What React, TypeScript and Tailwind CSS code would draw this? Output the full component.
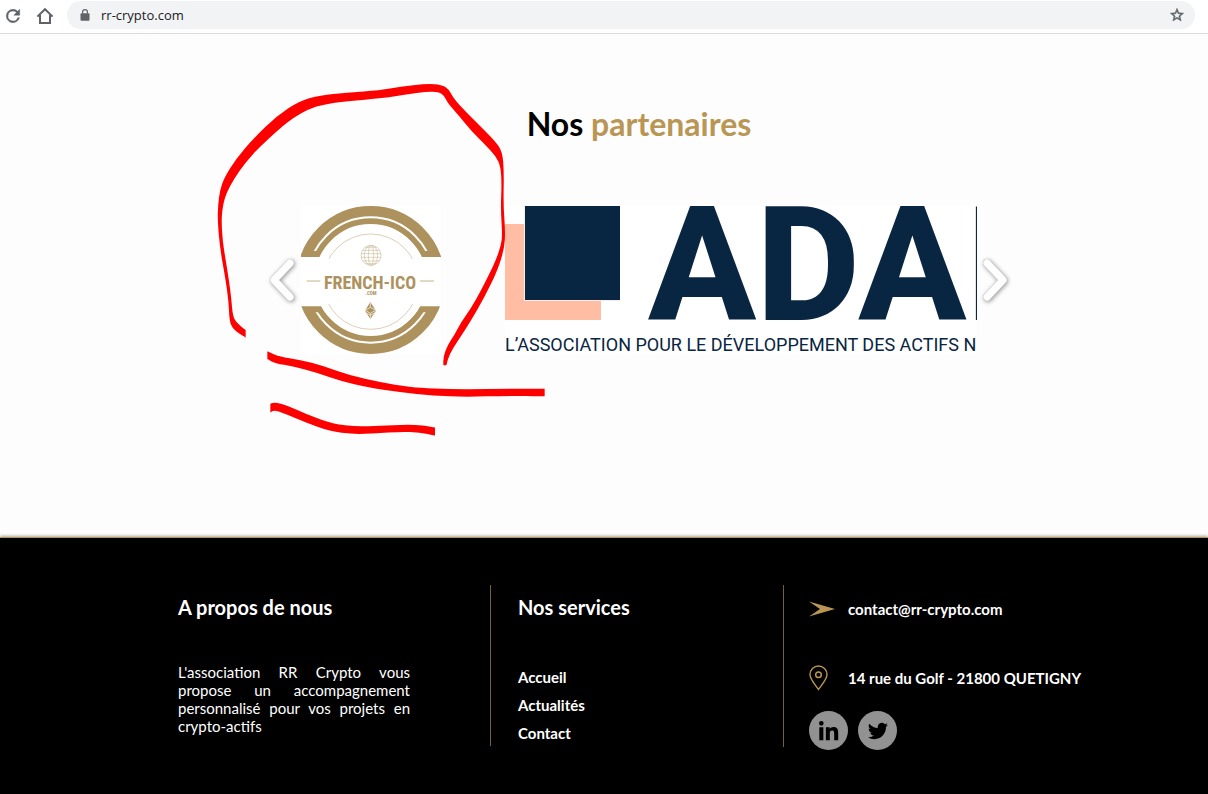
import React from "react";

type Point = [number, number];

/* Closed outline that runs smoothly through the midpoints of its points. */
function outline(points: Point[]): string {
  const mid = (a: Point, b: Point): Point => [(a[0] + b[0]) / 2, (a[1] + b[1]) / 2];
  const n = points.length;
  const start = mid(points[n - 1], points[0]);
  let d = `M${start[0]} ${start[1]}`;
  points.forEach((p, i) => {
    const m = mid(p, points[(i + 1) % n]);
    d += `Q${p[0]} ${p[1]} ${m[0]} ${m[1]}`;
  });
  return d + "Z";
}

const loop: Point[] = [
  [137, 788], [137, 788], [120, 777], [97, 760], [88, 735], [86, 680], [76, 610], [60, 520], [53, 440], [54, 390],
  [60, 345], [73, 308], [108, 252], [160, 191], [230, 123], [300, 77], [360, 61], [440, 53], [540, 46], [600, 35],
  [680, 26], [725, 29], [747, 43], [760, 70], [800, 113], [840, 153], [885, 198], [907, 230], [912, 290], [910, 390],
  [916, 470], [913, 520], [893, 585], [856, 662], [810, 742], [772, 800], [748, 838], [739, 871], [739, 871],
  [730, 871], [730, 871], [730, 845], [743, 810], [763, 780], [783, 742], [816, 695], [857, 620], [888, 555],
  [903, 510], [907, 480], [902, 400], [905, 330], [902, 275], [888, 244], [855, 209], [814, 168], [775, 120],
  [743, 84], [731, 60], [715, 51], [680, 50], [620, 58], [550, 70], [440, 78], [370, 88], [325, 103], [280, 128],
  [240, 160], [180, 215], [138, 260], [102, 312], [80, 352], [70, 385], [64, 430], [68, 500], [77, 555], [86, 610],
  [94, 670], [98, 720], [108, 742], [137, 765], [137, 765],
];

const underlineLong: Point[] = [
  [202, 829], [202, 829], [215, 835], [238, 845], [300, 854], [370, 873], [450, 901], [540, 922], [630, 936],
  [700, 941], [800, 943], [920, 941], [1034, 941], [1034, 941], [1034, 964], [1034, 964], [920, 962], [800, 966],
  [700, 962], [600, 952], [500, 937], [420, 917], [350, 893], [280, 874], [225, 865], [202, 852], [202, 852],
];

const underlineShort: Point[] = [
  [211, 986], [211, 986], [225, 982], [260, 990], [320, 1018], [400, 1047], [470, 1055], [540, 1052], [620, 1049],
  [670, 1051], [705, 1058], [705, 1058], [705, 1082], [705, 1082], [660, 1072], [600, 1070], [530, 1075],
  [460, 1078], [390, 1069], [310, 1040], [250, 1014], [222, 1005], [211, 1013], [211, 1013],
];

function InkMarks() {
  return (
    <svg
      viewBox="0 0 1050 1140"
      aria-hidden="true"
      className="pointer-events-none absolute -left-[70px] -top-[131px] z-10 h-[380px] w-[350px] fill-[#ff0000]"
    >
      <path d={outline(loop)} />
      <path d={outline(underlineLong)} />
      <path d={outline(underlineShort)} />
    </svg>
  );
}

function BrowserBar() {
  return (
    <header className="flex h-[34px] items-start gap-3 border-b border-[#dcdcde] bg-white pl-[3px] pr-[13px] font-['Open_Sans',sans-serif]">
      <div className="flex h-[31px] items-center gap-3 text-[#5f6368]">
        <button type="button" aria-label="Reload" className="flex">
          <svg viewBox="0 0 24 24" className="h-5 w-5 fill-current stroke-current">
            <path d="M17.65 6.35A7.96 7.96 0 0 0 12 4a8 8 0 1 0 7.73 10h-2.08A6 6 0 1 1 12 6c1.66 0 3.14.69 4.22 1.78L13 11h7V4z" strokeWidth="0.6" />
          </svg>
        </button>
        <button type="button" aria-label="Home" className="flex">
          <svg viewBox="0 0 20 18" className="h-[18px] w-5 fill-none stroke-current stroke-2">
            <path d="M2.400 9.600 10 2.200l7.600 7.400M5 8v8h10V8" />
          </svg>
        </button>
      </div>
      <div className="mt-px flex h-7 grow items-center gap-[11px] rounded-full bg-[#f1f3f4] pl-[13px] pr-[10px]">
        <svg viewBox="0 0 10 12" aria-hidden="true" className="h-3 w-[10px] text-[#5f6368]">
          <rect x="0.5" y="4.3" width="9" height="7.4" rx="1" fill="currentColor" />
          <path d="M2.600 4.600V3a2.400 2.400 0 0 1 4.800 0v1.600" fill="none" stroke="currentColor" strokeWidth="1.2" />
        </svg>
        <input
          aria-label="Address"
          defaultValue="rr-crypto.com"
          className="min-w-0 grow bg-transparent text-[13px] leading-5 text-[#202124] outline-none"
        />
        <button type="button" aria-label="Bookmark" className="flex text-[#5f6368]">
          <svg viewBox="0 0 24 24" className="h-4 w-4 fill-current">
            <path d="m22 9.240-7.190-.62L12 2 9.190 8.630 2 9.240l5.460 4.730L5.820 21 12 17.270 18.180 21l-1.630-7.030zM12 15.400l-3.760 2.270 1-4.280-3.320-2.880 4.380-.38L12 6.100l1.710 4.040 4.380.38-3.320 2.880 1 4.280z" stroke="currentColor" strokeWidth="0.8" />
          </svg>
        </button>
      </div>
    </header>
  );
}

function FrenchIcoLogo() {
  return (
    <svg viewBox="33 33 420 444" role="img" aria-label="French-ICO.com" className="h-[148px] w-[140px] shrink-0 bg-white">
      <defs>
        <clipPath id="bands">
          <path d="M30 30H456V186H30zM30 334H456V480H30z" />
        </clipPath>
        <clipPath id="gaps">
          <path d="M30 30H456V168H30zM30 352H456V480H30z" />
        </clipPath>
        <clipPath id="ring">
          <path d="M30 30H456V191H30zM30 327H456V480H30z" />
        </clipPath>
      </defs>
      <g fill="none">
        <circle cx="242" cy="255" r="195" stroke="#ae925e" strokeWidth="54" clipPath="url(#bands)" />
        <circle cx="242" cy="255" r="188" stroke="#fff" strokeWidth="6" clipPath="url(#gaps)" />
        <circle cx="242" cy="260" r="143" stroke="#d3c3a4" strokeWidth="2.4" clipPath="url(#ring)" />
        <g stroke="#cdbb98" strokeWidth="1.8">
          <circle cx="243" cy="181" r="30" />
          <ellipse cx="243" cy="181" rx="20" ry="30" />
          <ellipse cx="243" cy="181" rx="8" ry="30" />
          <path d="M217 166h52M213 176h60M213 187h60M218 198h50M227 157h32M227 206h32" />
        </g>
        <path d="M50 258h41M390 258h42" stroke="#d9ccb1" strokeWidth="4" />
      </g>
      <text x="240" y="282" textAnchor="middle" fontSize="54" fontWeight="700" fill="#ae925e" className="font-['Roboto_Condensed','Liberation_Sans_Narrow',sans-serif]">
        FRENCH-ICO
      </text>
      <text x="243" y="301" textAnchor="middle" fontSize="15" fontWeight="700" fill="#ae925e" className="font-['Roboto_Condensed','Liberation_Sans_Narrow',sans-serif]">
        .COM
      </text>
      <path d="m241 321 17 26-17 25-16-25z" fill="#ae925e" />
      <path d="m226 346 15-9 16 9-16 9zM241 323v14M241 355v15M229 354l12 7 12-7" fill="none" stroke="#fff" strokeWidth="2" />
    </svg>
  );
}

function AdanLogo() {
  return (
    <div className="flex h-[148px] min-w-0 grow flex-col overflow-hidden whitespace-nowrap bg-white font-['Roboto',sans-serif] text-[#082541]">
      <div className="flex h-[114px] gap-7">
        <svg viewBox="0 0 115 114" aria-hidden="true" className="h-[114px] w-[115px] shrink-0">
          <path d="M0 18h96v96H0z" fill="#ffbda3" />
          <path d="M19 0h96v95H19z" fill="#f4ece8" />
          <path d="M20 0h95v94H20z" fill="#082541" />
        </svg>
        <span className="text-[160px] font-extrabold leading-[120px]">ADAN</span>
      </div>
      <p className="mt-[15px] text-[18px] leading-[20px]">L’ASSOCIATION POUR LE DÉVELOPPEMENT DES ACTIFS NUMÉRIQUES</p>
    </div>
  );
}

function Arrow({ label, path }: { label: string; path: string }) {
  return (
    <button type="button" aria-label={label} className="flex shrink-0">
      <svg viewBox="0 0 26 44" className="h-11 w-[26px] overflow-visible drop-shadow-[1px_1px_2px_rgba(0,0,0,0.4)]">
        <path d={path} fill="none" stroke="#c9c9c9" strokeWidth="8" strokeLinecap="round" strokeLinejoin="round" />
        <path d={path} fill="none" stroke="#fff" strokeWidth="7" strokeLinecap="round" strokeLinejoin="round" />
      </svg>
    </button>
  );
}

function Partners() {
  return (
    <main className="flex flex-col items-center bg-[#fdfdfd] pb-[183px] pl-[70px] pt-[69px]">
      <h1 className="font-['Lato',sans-serif] text-[32px] font-bold leading-[42px] text-black">
        Nos <span className="text-[#b99653]">partenaires</span>
      </h1>
      <div className="relative mt-[61px] flex w-full max-w-[738px] items-center gap-[5px]">
        <Arrow label="Previous" path="M20 5 4 22l16 17" />
        <div className="flex min-w-0 grow gap-16">
          <FrenchIcoLogo />
          <AdanLogo />
        </div>
        <Arrow label="Next" path="M5 5l16 17L5 39" />
        <InkMarks />
      </div>
    </main>
  );
}

function Footer() {
  return (
    <footer className="grow border-t border-[#b99653] bg-black px-[178px] pt-[47px] font-['Lato',sans-serif] text-white shadow-[0_-1px_3px_rgba(0,0,0,0.35)]">
      <div className="grid grid-cols-[313px_293px_max-content] items-start">
        <section className="min-h-[161px] border-r border-[#76603a] pr-[80px]">
          <h2 className="pt-2 text-[20px] font-bold leading-[28px]">A propos de nous</h2>
          <p className="mt-[42px] text-justify text-[15px] leading-[18px]">
            L'association RR Crypto vous propose un accompagnement personnalisé pour vos projets en crypto-actifs
          </p>
        </section>
        <section className="min-h-[161px] border-r border-[#76603a] pl-[27px]">
          <h2 className="pt-2 text-[20px] font-bold leading-[28px]">Nos services</h2>
          <nav className="mt-[42px] flex flex-col items-start text-[15px] font-bold leading-7">
            <a href="#accueil">Accueil</a>
            <a href="#actualites">Actualités</a>
            <a href="#contact">Contact</a>
          </nav>
        </section>
        <section className="flex flex-col pl-[25px] text-[15px] font-bold leading-5">
          <a href="mailto:contact@rr-crypto.com" className="mt-[14px] flex items-center gap-[13px]">
            <svg viewBox="0 0 26 16" aria-hidden="true" className="h-4 w-[26px] fill-[#b99653]">
              <path d="M0 .5 26 8 0 15.500 11 8z" />
            </svg>
            contact@rr-crypto.com
          </a>
          <address className="mt-[46px] flex items-center gap-[20px] not-italic">
            <svg viewBox="0 0 19 26" aria-hidden="true" className="h-[26px] w-[19px] fill-none stroke-[#b99653]">
              <path d="M9.500 24.500C7 20.500 1 14.500 1 9.500a8.500 8.500 0 0 1 17 0c0 5-6 11-8.500 15z" strokeWidth="1.400" />
              <circle cx="9.500" cy="9.700" r="2.800" strokeWidth="1.500" />
            </svg>
            14 rue du Golf - 21800 QUETIGNY
          </address>
          <div className="mt-5 flex gap-[10px]">
            <a href="#linkedin" aria-label="LinkedIn" className="flex h-[39px] w-[39px] items-center justify-center rounded-full bg-[#929292]">
              <svg viewBox="0 0 24 24" className="h-[21px] w-[21px] fill-black">
                <path d="M1.500 8.400h4.600V23H1.500zM3.800 1.200a2.650 2.650 0 1 1 0 5.300 2.650 2.650 0 0 1 0-5.300zM9 8.400h4.400v2c.7-1.300 2.200-2.400 4.400-2.400 4.500 0 5.300 3 5.300 6.900V23h-4.600v-7.200c0-1.700 0-3.800-2.400-3.800-2.300 0-2.600 1.800-2.600 3.700V23H9z" />
              </svg>
            </a>
            <a href="#twitter" aria-label="Twitter" className="flex h-[39px] w-[39px] items-center justify-center rounded-full bg-[#929292]">
              <svg viewBox="0 0 24 24" className="h-5 w-5 fill-black">
                <path d="M23.950 4.570a10 10 0 0 1-2.820.77 4.960 4.960 0 0 0 2.160-2.720c-.95.550-2 .95-3.120 1.180a4.920 4.920 0 0 0-8.380 4.480C7.690 8.090 4.070 6.130 1.640 3.160a4.920 4.920 0 0 0 1.520 6.570 4.900 4.900 0 0 1-2.230-.61v.06a4.930 4.930 0 0 0 3.950 4.830 5 5 0 0 1-2.210.08 4.940 4.940 0 0 0 4.600 3.420A9.870 9.870 0 0 1 0 19.540a13.990 13.990 0 0 0 7.550 2.210c9.050 0 14-7.500 14-13.980 0-.21 0-.42-.02-.63a9.940 9.940 0 0 0 2.460-2.550z" />
              </svg>
            </a>
          </div>
        </section>
      </div>
    </footer>
  );
}

export default function App() {
  return (
    <div className="flex min-h-screen flex-col">
      <BrowserBar />
      <Partners />
      <Footer />
    </div>
  );
}
